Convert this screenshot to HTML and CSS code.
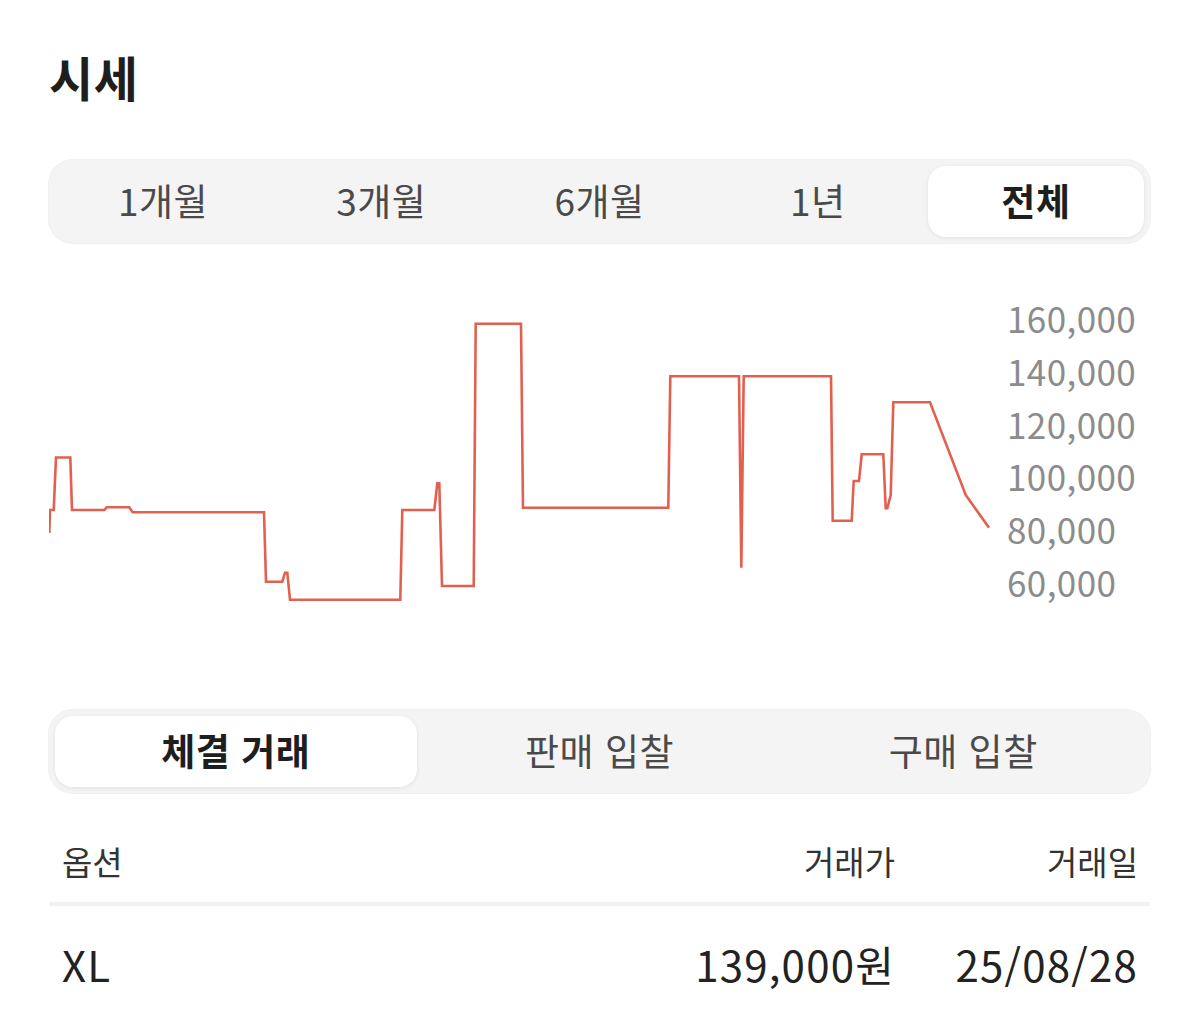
FILE: index.html
```html
<!DOCTYPE html>
<html lang="ko">
<head>
<meta charset="utf-8">
<title>시세</title>
<link rel="stylesheet" href="styles.css">
</head>
<body>
<main class="page">
  <h1 class="title">시세</h1>

  <div class="seg seg-period">
    <div class="seg-item">1개월</div>
    <div class="seg-item">3개월</div>
    <div class="seg-item">6개월</div>
    <div class="seg-item">1년</div>
    <div class="seg-item active">전체</div>
  </div>

  <section class="chart">
    <svg class="chart-svg" width="958" height="467" viewBox="49 243 958 467" xmlns="http://www.w3.org/2000/svg">
      <polyline fill="none" stroke="#e2604f" stroke-width="2.6" stroke-linejoin="miter" stroke-linecap="butt"
        points="49.3,533 50,510 53.7,510 56,457.5 70.3,457.5 72,510 104.3,510 106.7,507.3 129.3,507.3 132.7,512.3 264,512.3 266,581.7 282.3,581.7 285,572.7 287.3,572.7 290,599.7 400.3,599.7 402.3,510 434.3,510 437.3,483.3 439.3,483.3 442,586 473.7,586 475.7,323.7 521,323.7 523,507.7 668.3,507.7 670.3,376.3 739,376.3 741.3,567.7 743.7,376.3 831,376.3 832.7,520.7 851.7,520.7 853.7,481 859,481 861.7,454.3 883.3,454.3 885.7,508.3 887.3,508.3 890.7,495 893.3,402.3 930,402.3 965.7,495 989,527.7"/>
    </svg>
    <ul class="y-axis">
      <li>160,000</li>
      <li>140,000</li>
      <li>120,000</li>
      <li>100,000</li>
      <li>80,000</li>
      <li>60,000</li>
    </ul>
  </section>

  <div class="seg seg-type">
    <div class="seg-item">체결 거래</div>
    <div class="seg-item">판매 입찰</div>
    <div class="seg-item">구매 입찰</div>
  </div>

  <div class="table">
    <div class="thead">
      <span class="col-opt">옵션</span>
      <span class="col-price">거래가</span>
      <span class="col-date">거래일</span>
    </div>
    <div class="divider"></div>
    <div class="trow">
      <span class="col-opt">XL</span>
      <span class="col-price">139,000원</span>
      <span class="col-date">25/08/28</span>
    </div>
  </div>
</main>
</body>
</html>
```
FILE: styles.css
```css
* {
  box-sizing: border-box;
}

html, body {
  margin: 0;
  padding: 0;
  background: #ffffff;
}

body {
  font-family: "Noto Sans CJK KR", "Noto Sans", sans-serif;
  color: #222222;
}

.page {
  width: 1200px;
  padding: 0 49px 0 49px;
  overflow: hidden;
  height: 1015px;
}

.title {
  margin: 0;
  padding-top: 44px;
  height: 160px;
  font-size: 48px;
  font-weight: 700;
  line-height: 64px;
  color: #1e1e1e;
  letter-spacing: 0.5px;
}

.seg {
  display: flex;
  gap: 2px;
  padding: 6px;
  height: 83px;
  width: 1101px;
  background: #f4f4f4;
  border-radius: 24px;
  box-shadow: 0 0 0 1px #f0f0f0;
}

.seg-item {
  flex: 1;
  display: flex;
  align-items: center;
  justify-content: center;
  padding-bottom: 4px;
  border-radius: 18px;
  font-size: 37px;
  color: #4a4a4a;
  font-weight: 400;
  letter-spacing: 0.5px;
}

.seg-type .seg-item:first-child,
.seg-period .seg-item:last-child {
  background: #ffffff;
  color: #1e1e1e;
  font-weight: 700;
  box-shadow: 0 1px 4px rgba(0, 0, 0, 0.08);
}

.chart {
  display: flex;
  height: 467px;
}

.chart-svg {
  display: block;
  flex: none;
}

.y-axis {
  list-style: none;
  margin: 0;
  padding: 49px 0 0 0;
  flex: 1;
}

.y-axis li {
  height: 52.8px;
  line-height: 52.8px;
  font-size: 35px;
  color: #8c8c8c;
  letter-spacing: 0.4px;
}

.table {
  width: 1101px;
}

.thead,
.trow {
  display: flex;
  align-items: center;
  padding: 0 13px;
}

.thead {
  height: 109px;
  padding-top: 26px;
  font-size: 33px;
  color: #333333;
}

.thead .col-price,
.thead .col-date {
  margin-right: -1px;
}

.divider {
  height: 4px;
  background: #f2f2f2;
}

.trow {
  height: 118px;
  padding-bottom: 4px;
  font-size: 42px;
  color: #222222;
  letter-spacing: 1.2px;
}

.trow .col-price,
.trow .col-date {
  margin-right: -1px;
}

.col-opt {
  flex: 1;
}

.col-price {
  text-align: right;
}

.col-date {
  width: 244px;
  text-align: right;
}
```
